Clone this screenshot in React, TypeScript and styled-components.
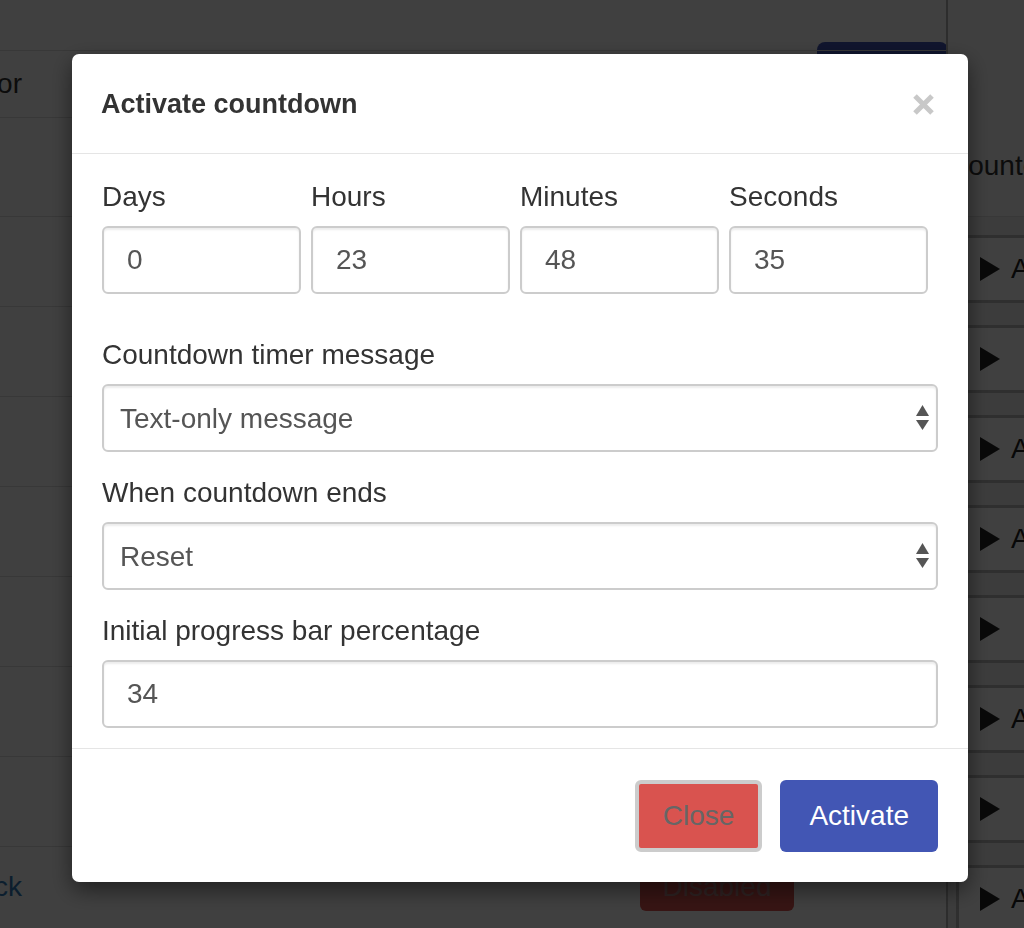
import styled, { createGlobalStyle } from 'styled-components';

const GlobalStyle = createGlobalStyle`
  html, body {
    margin: 0;
    padding: 0;
  }
  body {
    width: 1024px;
    height: 928px;
    overflow: hidden;
    background: #fff;
    font-family: 'Liberation Sans', Arial, sans-serif;
  }
  * {
    box-sizing: border-box;
  }
`;

const rows = [
  { h: 67, head: 'Color' },
  { h: 99 },
  { h: 90 },
  { h: 90 },
  { h: 90 },
  { h: 90 },
  { h: 90 },
  { h: 90 },
  { h: 90 },
  { h: 80, link: 'Back', disabled: true },
];

const sideItems = ['Activate', '', 'Activate', 'Activate', '', 'Activate', '', 'Activate'];

export default function App() {
  return (
    <>
      <GlobalStyle />
      <Page>
        <Main>
          <TopStrip>
            <NewButton />
          </TopStrip>
          {rows.map((r, i) => (
            <Row key={i} $h={r.h}>
              <FirstCell $link={!!r.link}>{r.head || r.link}</FirstCell>
              <div />
              <div>{r.disabled && <DisabledButton>Disabled</DisabledButton>}</div>
              <div />
            </Row>
          ))}
        </Main>
        <Side>
          <SideTitle>Counters</SideTitle>
          <SideList>
            {sideItems.map((t, i) => (
              <SideItem key={i}>
                <Play width="20" height="24" viewBox="0 0 20 24">
                  <polygon points="0,0 20,12 0,24" />
                </Play>
                {t}
              </SideItem>
            ))}
          </SideList>
        </Side>
      </Page>

      <Backdrop>
        <Dialog>
          <Header>
            <Title>Activate countdown</Title>
            <CloseX width="21" height="21" viewBox="0 0 21 21">
              <path d="M2 2 L19 19 M19 2 L2 19" />
            </CloseX>
          </Header>
          <Body>
            <TimeRow>
              {[
                ['Days', '0'],
                ['Hours', '23'],
                ['Minutes', '48'],
                ['Seconds', '35'],
              ].map(([label, value]) => (
                <div key={label}>
                  <Label>{label}</Label>
                  <Input defaultValue={value} />
                </div>
              ))}
            </TimeRow>
            <Group>
              <Label>Countdown timer message</Label>
              <SelectWrap>
                <Select defaultValue="text">
                  <option value="text">Text-only message</option>
                </Select>
                <Arrows width="13" height="26" viewBox="0 0 13 26">
                  <polygon points="6.5,0 13,11 0,11" />
                  <polygon points="0,15 13,15 6.5,25" />
                </Arrows>
              </SelectWrap>
            </Group>
            <Group>
              <Label>When countdown ends</Label>
              <SelectWrap>
                <Select defaultValue="reset">
                  <option value="reset">Reset</option>
                </Select>
                <Arrows width="13" height="26" viewBox="0 0 13 26">
                  <polygon points="6.5,0 13,11 0,11" />
                  <polygon points="0,15 13,15 6.5,25" />
                </Arrows>
              </SelectWrap>
            </Group>
            <Group $last>
              <Label>Initial progress bar percentage</Label>
              <Input defaultValue="34" />
            </Group>
          </Body>
          <Footer>
            <Button $variant="close">Close</Button>
            <Button $variant="primary">Activate</Button>
          </Footer>
        </Dialog>
      </Backdrop>
    </>
  );
}

/* page behind the modal */

const Page = styled.div`
  display: flex;
  width: 1024px;
  height: 928px;
  overflow: hidden;
`;

const Main = styled.div`
  width: 946px;
  flex-shrink: 0;
  display: flex;
  flex-direction: column;
`;

const TopStrip = styled.div`
  height: 50px;
  flex-shrink: 0;
  display: flex;
  justify-content: flex-end;
`;

const NewButton = styled.div`
  width: 131px;
  height: 52px;
  margin-top: 42px;
  margin-right: -2px;
  background: #4255b4;
  border-radius: 8px;
`;

const Row = styled.div<{ $h: number }>`
  display: grid;
  grid-template-columns: 40px 1fr 154px 152px;
  align-items: center;
  height: ${(p) => p.$h}px;
  flex-shrink: 0;
  border-top: 1px solid #ddd;
`;

const FirstCell = styled.div<{ $link: boolean }>`
  min-width: 0;
  display: flex;
  justify-content: flex-end;
  padding-right: 18px;
  white-space: nowrap;
  font-size: 28px;
  color: ${(p) => (p.$link ? '#337ab7' : '#333')};
`;

const DisabledButton = styled.div`
  height: 48px;
  display: flex;
  align-items: center;
  justify-content: center;
  background: #d9534f;
  border-radius: 6px;
  font-size: 28px;
  color: #b88888;
`;

const Side = styled.aside`
  width: 200px;
  flex-shrink: 0;
  border-left: 2px solid #b5b5b5;
  background: #f0f0f0;
`;

const SideTitle = styled.div`
  height: 217px;
  display: flex;
  align-items: flex-end;
  padding-bottom: 33px;
  border-bottom: 1px solid #ddd;
  background: #fafafa;
  font-size: 28px;
  line-height: 34px;
  color: #333;
  white-space: nowrap;
`;

const SideList = styled.div`
  padding: 18px 0 0 8px;
`;

const SideItem = styled.div`
  height: 68px;
  margin-bottom: 22px;
  display: flex;
  align-items: center;
  gap: 11px;
  padding-left: 21px;
  border: 3px solid #bbb;
  border-radius: 4px;
  background: #fff;
  font-size: 28px;
  color: #222;
  white-space: nowrap;
`;

const Play = styled.svg`
  fill: #222;
  flex-shrink: 0;
`;

/* modal */

const Backdrop = styled.div`
  position: fixed;
  inset: 0;
  background: rgba(0, 0, 0, 0.75);
  padding: 54px 56px 0 72px;
`;

const Dialog = styled.div`
  width: 896px;
  background: #fff;
  border-radius: 7px;
  box-shadow: 0 8px 22px rgba(0, 0, 0, 0.5);
`;

const Header = styled.div`
  display: flex;
  align-items: center;
  justify-content: space-between;
  padding: 30px 34px 29px 29px;
  border-bottom: 1px solid #e5e5e5;
`;

const Title = styled.h4`
  margin: 0;
  font-size: 27px;
  font-weight: 700;
  line-height: 40px;
  color: #333;
`;

const CloseX = styled.svg`
  stroke: #c8c8c8;
  stroke-width: 5;
  fill: none;
`;

const Body = styled.div`
  padding: 26px 30px 20px;
`;

const TimeRow = styled.div`
  display: grid;
  grid-template-columns: repeat(4, 1fr);
  gap: 10px;
  padding-right: 10px;
  margin-bottom: 44px;
`;

const Group = styled.div<{ $last?: boolean }>`
  margin-bottom: ${(p) => (p.$last ? 0 : 24)}px;
`;

const Label = styled.label`
  display: block;
  margin-bottom: 12px;
  font-size: 28px;
  line-height: 34px;
  color: #333;
`;

const Input = styled.input`
  display: block;
  width: 100%;
  height: 68px;
  padding: 0 23px;
  border: 2px solid #ccc;
  border-radius: 6px;
  box-shadow: inset 0 2px 2px rgba(0, 0, 0, 0.075);
  font-family: 'Liberation Sans', Arial, sans-serif;
  font-size: 28px;
  color: #555;
  outline: none;
`;

const SelectWrap = styled.div`
  position: relative;
`;

const Select = styled.select`
  display: block;
  width: 100%;
  height: 68px;
  padding: 0 16px;
  appearance: none;
  background: #fff;
  border: 2px solid #ccc;
  border-radius: 6px;
  box-shadow: inset 0 2px 2px rgba(0, 0, 0, 0.075);
  font-family: 'Liberation Sans', Arial, sans-serif;
  font-size: 28px;
  color: #555;
  outline: none;
`;

const Arrows = styled.svg`
  position: absolute;
  right: 9px;
  top: 21px;
  fill: #555;
  pointer-events: none;
`;

const Footer = styled.div`
  display: flex;
  justify-content: flex-end;
  gap: 18px;
  padding: 31px 30px 30px;
  border-top: 1px solid #e5e5e5;
`;

const Button = styled.button<{ $variant: 'close' | 'primary' }>`
  height: 72px;
  padding: 0 ${(p) => (p.$variant === 'close' ? 24 : 29)}px;
  border-radius: 6px;
  font-family: 'Liberation Sans', Arial, sans-serif;
  font-size: 28px;
  cursor: pointer;
  background: ${(p) => (p.$variant === 'close' ? '#d9534f' : '#4256b4')};
  color: ${(p) => (p.$variant === 'close' ? '#666' : '#fff')};
  border: ${(p) => (p.$variant === 'close' ? '4px solid #ccc' : 'none')};
`;
